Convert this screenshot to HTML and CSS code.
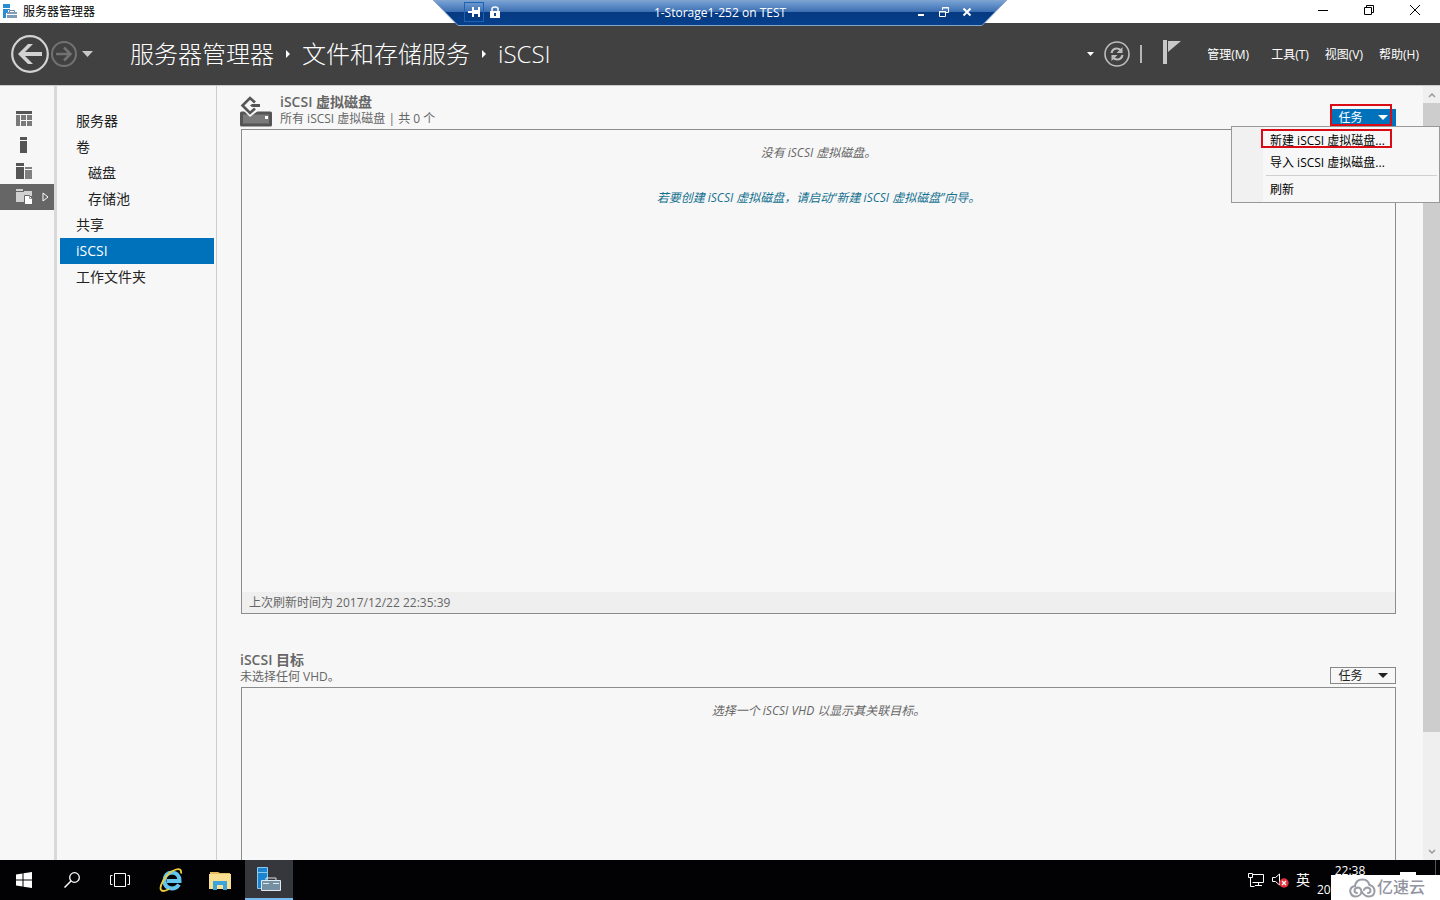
FILE: index.html
```html
<!DOCTYPE html>
<html lang="zh-CN">
<head>
<meta charset="utf-8">
<title>服务器管理器</title>
<link rel="stylesheet" href="styles.css">
</head>
<body>
<div class="titlebar">
  <svg class="app-icon" width="15" height="15" viewBox="0 0 15 15"><path fill="#2a8dd4" d="M0 0h7v4H0zM0 5h7v1H5v3H3v5H0z"/><path fill="#7f9db5" d="M4 8h10v6H4z"/><path fill="none" stroke="#6688a3" d="M6.500 8V6.500h5V8"/><path stroke="#fff" d="M4 10.500h10"/></svg>
  <span class="titlebar-text">服务器管理器</span>
  <div class="window-controls">
    <button aria-label="最小化"><svg width="12" height="12" viewBox="0 0 12 12"><path d="M1 6.500h10"/></svg></button>
    <button aria-label="还原"><svg width="12" height="12" viewBox="0 0 12 12"><path d="M1.500 3.500h7v7h-7zM3.500 3.500v-2h7v7h-2"/></svg></button>
    <button aria-label="关闭"><svg width="12" height="12" viewBox="0 0 12 12"><path d="M1 1l10 10M11 1L1 11"/></svg></button>
  </div>
</div>

<div class="rdp">
  <svg class="rdp-shape" width="576" height="26" viewBox="0 0 576 26">
    <defs><linearGradient id="rdpfill" x1="0" y1="0" x2="0" y2="1"><stop offset="0" stop-color="#7ba5d6"/><stop offset=".46" stop-color="#3d70b3"/><stop offset=".48" stop-color="#063a82"/><stop offset="1" stop-color="#07408c"/></linearGradient></defs>
    <path d="M1 0L26 25.500H550L575 0z" fill="url(#rdpfill)" stroke="#86a3c8"/>
  </svg>
  <div class="rdp-row">
    <div class="rdp-group">
      <button class="pin" aria-label="固定"><svg width="12" height="10" viewBox="0 0 12 10"><path fill="#fff" d="M0 4h4V0h2v3h4V0h2v10h-2V7H6v3H4V6H0z"/></svg></button>
      <svg width="10" height="12" viewBox="0 0 10 12"><path d="M2 5V3q0-2 3-2t3 2v2" fill="none" stroke="#fff" stroke-width="1.500"/><path fill="#fff" d="M0 5h10v7H0z"/><path fill="#174888" d="M4 7h2v3H4z"/></svg>
    </div>
    <span class="rdp-title">1-Storage1-252 on TEST</span>
    <div class="rdp-group rdp-controls">
      <button aria-label="最小化连接栏"><svg width="10" height="10" viewBox="0 0 10 10"><path fill="#fff" d="M2 7h6v2H2z"/></svg></button>
      <button aria-label="还原连接"><svg width="10" height="10" viewBox="0 0 10 10"><path d="M3.500 3V.500h6v5H7M.500 4.500h6v5h-6zM3 1h7M0 5h7" fill="none" stroke="#fff"/></svg></button>
      <button aria-label="关闭连接"><svg width="10" height="10" viewBox="0 0 10 10"><path d="M1.500 1.500l7 7M8.500 1.500l-7 7" stroke="#fff" stroke-width="2"/></svg></button>
    </div>
  </div>
</div>

<header class="header">
  <div class="nav">
    <button aria-label="后退"><svg width="38" height="38" viewBox="0 0 38 38"><circle cx="19" cy="19" r="17.800" fill="none" stroke="#d2d2d2" stroke-width="2.200"/><path d="M31 17H14l8-8h-5L7 19l10 10h5l-8-8h17z" fill="#d2d2d2"/></svg></button>
    <button aria-label="前进"><svg width="26" height="26" viewBox="0 0 26 26"><circle cx="13" cy="13" r="12" fill="none" stroke="#727272" stroke-width="2"/><path d="M5 13h14M13 6.500l6.500 6.500-6.500 6.500" fill="none" stroke="#727272" stroke-width="2.500"/></svg></button>
    <button class="nav-more" aria-label="历史记录"><svg width="11" height="7" viewBox="0 0 11 7"><path fill="#c8c8c8" d="M0 0h11L5.500 6z"/></svg></button>
  </div>
  <nav class="crumbs">
    <a href="#">服务器管理器</a>
    <svg width="6" height="8" viewBox="0 0 6 8"><path fill="#fff" d="M1 0v8l4-4z"/></svg>
    <a href="#">文件和存储服务</a>
    <svg width="6" height="8" viewBox="0 0 6 8"><path fill="#fff" d="M1 0v8l4-4z"/></svg>
    <a href="#">iSCSI</a>
  </nav>
  <div class="tools">
    <svg width="7" height="4" viewBox="0 0 7 4"><path fill="#fff" d="M0 0h7L3.500 4z"/></svg>
    <button aria-label="刷新"><svg width="26" height="26" viewBox="0 0 26 26"><circle cx="13" cy="13" r="12" fill="none" stroke="#bdbdbd" stroke-width="1.600"/><path d="M7.500 12q1-4.500 5.500-4.500 2.500 0 4.500 2.500M18.500 14q-1 4.500-5.500 4.500-2.500 0-4.500-2.500" fill="none" stroke="#bdbdbd" stroke-width="2.200"/><path d="M18.500 6v6h-6zM7.500 20v-6h6z" fill="#bdbdbd"/></svg></button>
    <span class="divider"></span>
    <button class="flag" aria-label="通知"><svg width="18" height="24" viewBox="0 0 18 24"><path fill="#c8c8c8" d="M0 0h4v24H0zM5 1h13L5 12z"/></svg></button>
    <div class="menus"><button class="manage">管理(M)</button><button>工具(T)</button><button>视图(V)</button><button>帮助(H)</button></div>
  </div>
</header>

<main class="main">
  <nav class="rail">
    <button aria-label="仪表板"><svg width="16" height="16" viewBox="0 0 16 16"><path fill="#555" d="M0 0h16v3H0z"/><path fill="#7a7a7a" d="M0 4h4v11H0zM5 4h5v5H5zM11 4h5v5h-5zM5 10h5v5H5zM11 10h5v5h-5z"/></svg></button>
    <button aria-label="本地服务器"><svg width="16" height="16" viewBox="0 0 16 16"><path fill="#555" d="M4 0h7v3H4zM4 4h7v12H4z"/></svg></button>
    <button aria-label="所有服务器"><svg width="16" height="16" viewBox="0 0 16 16"><path fill="#555" d="M0 0h8v3H0zM0 4h8v12H0z"/><path fill="#808080" d="M9 4h7v2H9zM9 7h7v9H9z"/></svg></button>
    <button class="active" aria-label="文件和存储服务"><svg width="17" height="16" viewBox="0 0 17 16"><path fill="#d0d0d0" d="M0 0h7v2H0zM0 3h8v10H0zM8 2h8v5H8z"/><path fill="#fff" stroke="#666" d="M8.500 6.500h5l3 3v6h-8z"/><path fill="none" stroke="#999" d="M13.500 7v2.500H16"/></svg><svg class="expand" width="7" height="10" viewBox="0 0 7 10"><path d="M1 1v8l5-4z" fill="none" stroke="#fff"/></svg></button>
  </nav>
  <nav class="sidebar">
    <a href="#">服务器</a>
    <a href="#">卷</a>
    <a href="#" class="sub">磁盘</a>
    <a href="#" class="sub">存储池</a>
    <a href="#">共享</a>
    <a href="#" class="selected">iSCSI</a>
    <a href="#">工作文件夹</a>
  </nav>
  <div class="content">
    <section class="tile">
      <div class="tile-head">
        <svg class="tile-icon" width="32" height="31" viewBox="0 0 32 31"><path d="M1.500 17h29v12h-29z" fill="#7b7b7b" stroke="#555" stroke-width="3" stroke-linejoin="round"/><path fill="#f7f7f7" d="M1 9h18v5l-9 7-7-7z"/><path fill="#fff" d="M25 20h3v3h-3z"/><path d="M15 6.500L10 2 2.500 9.500 10 17l5-4.500" fill="none" stroke="#555" stroke-width="2.600"/><path fill="#555" d="M10 9.500l2-1.500h8v3h-8z"/></svg>
        <div class="tile-titles"><h2>iSCSI 虚拟磁盘</h2><p>所有 iSCSI 虚拟磁盘 | 共 0 个</p></div>
        <div class="tasks">
          <button class="tasks-btn open">任务<svg width="10" height="5" viewBox="0 0 10 5"><path fill="currentColor" d="M0 0h10L5 5z"/></svg></button>
          <div class="menu">
            <button>新建 iSCSI 虚拟磁盘...</button>
            <button>导入 iSCSI 虚拟磁盘...</button>
            <hr>
            <button>刷新</button>
            <span class="mark mark-item"></span>
          </div>
          <span class="mark mark-tasks"></span>
        </div>
      </div>
      <div class="panel panel-disks">
        <div class="empty"><p>没有 iSCSI 虚拟磁盘。</p><a href="#">若要创建 iSCSI 虚拟磁盘，请启动“新建 iSCSI 虚拟磁盘”向导。</a></div>
        <div class="panel-foot">上次刷新时间为 2017/12/22 22:35:39</div>
      </div>
    </section>
    <section class="tile tile-targets">
      <div class="tile-head">
        <div class="tile-titles"><h2>iSCSI 目标</h2><p>未选择任何 VHD。</p></div>
        <div class="tasks"><button class="tasks-btn">任务<svg width="10" height="5" viewBox="0 0 10 5"><path fill="currentColor" d="M0 0h10L5 5z"/></svg></button></div>
      </div>
      <div class="panel panel-targets"><div class="empty"><p>选择一个 iSCSI VHD 以显示其关联目标。</p></div></div>
    </section>
  </div>
  <div class="scrollbar">
    <button aria-label="向上滚动"><svg width="8" height="6" viewBox="0 0 8 6"><path d="M1 5l3-3 3 3" fill="none" stroke="#999" stroke-width="1.500"/></svg></button>
    <div class="track"><div class="thumb"></div></div>
    <button aria-label="向下滚动"><svg width="8" height="6" viewBox="0 0 8 6"><path d="M1 1l3 3 3-3" fill="none" stroke="#999" stroke-width="1.500"/></svg></button>
  </div>
</main>

<footer class="taskbar">
  <div class="system-apps">
    <button aria-label="开始"><svg width="16" height="16" viewBox="0 0 16 16"><path fill="#fff" d="M0 2.500l6.500-1v6H0zM7.500 1.300L16 0v7.500H7.500zM0 8.500h6.500v6l-6.500-1zM7.500 8.500H16V16l-8.500-1.300z"/></svg></button>
    <button aria-label="搜索"><svg width="16" height="16" viewBox="0 0 16 16"><circle cx="10.500" cy="5.500" r="4.800" fill="none" stroke="#fff" stroke-width="1.300"/><path d="M7 9L.500 15.500" stroke="#fff" stroke-width="1.500"/></svg></button>
    <button aria-label="任务视图"><svg width="22" height="14" viewBox="0 0 22 14"><path d="M5.500.500h11v13h-11zM3.500 2.500h-2v9h2M18.500 2.500h2v9h-2" fill="none" stroke="#fff"/></svg></button>
  </div>
  <div class="apps">
    <button aria-label="Internet Explorer"><svg width="24" height="24" viewBox="0 0 24 24"><path d="M20 16.500Q17.500 20.500 13 20.500 5.500 20 5.500 12.500 6 5 13 4.500q7.500.500 7.500 8.500H8" fill="none" stroke="#64c5ef" stroke-width="4"/><path d="M4 23Q-1 22 4 13 9 4 17 1.500q6-1.500 5 4M4 23q3 0 6-2" fill="none" stroke="#f0cf38" stroke-width="1.800"/></svg></button>
    <button aria-label="文件资源管理器"><svg width="22" height="19" viewBox="0 0 22 19"><path fill="#e8bc5e" d="M1 1h8l2 1h10v15H1z"/><path fill="#f9df91" d="M0 3h22v15H0z"/><path fill="#3ba4dc" d="M4 10h14v9h-4v-5H8v5H4z"/></svg></button>
    <button class="running" aria-label="服务器管理器"><svg width="24" height="24" viewBox="0 0 24 24"><path fill="#1c83cf" stroke="#8cc9ee" d="M.500.500h10v21H.500zM1 5.500h9"/><path fill="none" stroke="#d9e4ec" d="M9 13v-2h10v2"/><path fill="#758fa3" stroke="#dfe8ef" d="M4.500 13.500h19v10h-19z"/><path stroke="#dfe8ef" d="M6 16.500h6M16 16.500h6"/></svg></button>
  </div>
  <div class="tray">
    <svg width="17" height="14" viewBox="0 0 17 14"><path d="M4.500 1.500h11v8h-11M.500.500h4v4h-4zM2.500 5v8.500h4M10.500 9.500v3M7 12.500h7" fill="none" stroke="#fff"/></svg>
    <svg width="17" height="15" viewBox="0 0 17 15"><path d="M.500 4.500h3l4-3.500v11l-4-3.500h-3z" fill="none" stroke="#fff"/><circle cx="12" cy="10" r="4.700" fill="#e0303c"/><path d="M10 8l4 4M14 8l-4 4" stroke="#fff" stroke-width="1.300"/></svg>
    <span class="ime">英</span>
    <div class="clock"><time>22:38</time><span>20</span></div>
    <span class="note"></span>
    <span class="desktop-edge"></span>
  </div>
  <div class="brand"><svg width="27" height="20" viewBox="0 0 27 20"><g fill="none" stroke="#9a9ca6" stroke-width="2" stroke-linecap="round"><path d="M6 8Q7 1.500 13.500 1.500 19 1.500 20.500 7"/><path d="M6 8Q1 9 1.200 13.500 2 18.500 7 18.500q5-.500 5.500-5-.500-4-4-4Q5.500 10 5.500 13 6 15 8 15"/><path d="M20.500 7q5 1 5 6.500-.500 5-5.500 5-4.500 0-7.500-5M15 12q1-2.500 3.500-2.500 3 .500 3 3.500-.500 2-2.500 2"/></g></svg><span>亿速云</span></div>
</footer>
</body>
</html>
```
FILE: styles.css
```css
* { box-sizing: border-box; }
body {
  margin: 0;
  height: 100vh;
  display: flex;
  flex-direction: column;
  overflow: hidden;
  position: relative;
  background: #f7f7f7;
  color: #222;
  font: 12px/16px "Open Sans", "Noto Sans CJK SC", sans-serif;
}
button {
  display: flex;
  align-items: center;
  justify-content: center;
  border: 0;
  padding: 0;
  background: none;
  color: inherit;
  font: inherit;
}
a { color: inherit; text-decoration: none; }
p, h2 { margin: 0; }
svg { display: block; flex: none; }

.titlebar { display: flex; align-items: center; flex: none; height: 23px; padding-left: 3px; background: #fff; color: #000; }
.titlebar-text { margin-left: 5px; }
.window-controls { display: flex; margin-left: auto; height: 20px; align-self: flex-start; }
.window-controls button { width: 46px; }
.window-controls button:last-child { margin-right: 2px; }
.window-controls path { fill: none; stroke: #000; }

.rdp { position: absolute; z-index: 5; top: 0; left: 50%; margin-left: -288px; width: 576px; height: 26px; color: #fff; }
.rdp-shape { position: absolute; top: 0; left: 0; }
.rdp-row { position: relative; display: grid; grid-template-columns: 1fr auto 1fr; align-items: center; height: 24px; padding: 0 36px 0 32px; }
.rdp-title { padding: 2px 0 0 4px; }
.rdp-group { display: flex; align-items: center; gap: 6px; }
.pin { width: 20px; height: 20px; border: 1px solid #1d63b4; }
.rdp-controls { justify-content: flex-end; gap: 13px; }

.header { display: flex; align-items: center; flex: none; height: 62px; padding: 0 21px 0 11px; background: #414141; color: #fff; }
.nav { display: flex; align-items: center; gap: 2px; width: 119px; }
.nav-more { margin-left: 3px; }
.crumbs { display: flex; align-items: center; gap: 11px; font-size: 24px; line-height: 32px; font-weight: 300; }
.tools { display: flex; align-items: center; margin-left: auto; }
.tools button { margin-left: 10px; }
.divider { width: 2px; height: 18px; margin-left: 10px; background: #b5b5b5; }
.tools .flag { margin: 0 0 4px 21px; }
.menus { display: flex; gap: 16px; margin-left: 26px; padding-top: 2px; }
.tools .menus button { margin: 0; }
.tools .menus .manage { margin-right: 6px; }

.main { display: flex; flex: 1; min-height: 0; border-top: 1px solid #ccc; }
.rail { flex: none; width: 57px; padding-top: 20px; border-right: 3px solid #d9d9d9; }
.rail button { width: 100%; height: 26px; padding-left: 16px; justify-content: flex-start; }
.rail .active { background: #666; }
.expand { margin-left: 9px; }
.sidebar { flex: none; width: 160px; padding: 22px 2px 0 3px; border-right: 1px solid #ccc; font-size: 14px; line-height: 26px; }
.sidebar a { display: block; padding-left: 16px; }
.sidebar .sub { padding-left: 28px; }
.sidebar .selected { background: #0072bc; color: #fff; }

.content { display: flex; flex-direction: column; flex: 1; min-width: 0; padding: 7px 27px 0 23px; color: #666; }
.tile-head { display: flex; align-items: flex-end; padding-bottom: 2px; }
.tile-icon { margin-right: 8px; }
.tile-titles h2 { font-size: 14px; line-height: 18px; font-weight: 600; }
.tasks { position: relative; margin: 0 0 1px auto; }
.tasks-btn { width: 66px; height: 17px; gap: 15px; border: 1px solid #888; color: #222; }
.tasks-btn.open { border-color: #0072bc; background: #0072bc; color: #fff; }
.panel { display: flex; flex-direction: column; margin-left: 1px; border: 1px solid #8c8c8c; }
.panel-disks { min-height: 485px; }
.empty { flex: 1; padding-top: 15px; text-align: center; font-style: italic; }
.empty p { margin-bottom: 29px; }
.empty a { color: #14718f; }
.panel-foot { padding: 3px 7px 2px; background: #efefef; }
.tile-targets { display: flex; flex-direction: column; flex: 1; margin-top: 37px; }
.panel-targets { flex: 1; border-bottom: 0; }

.menu { position: absolute; z-index: 3; top: 17px; right: -44px; width: 209px; padding: 3px 2px 1px; border: 1px solid #999; background: linear-gradient(90deg, #f1f1f1 31px, #f7f7f7 31px); color: #000; }
.menu button { width: 100%; height: 22px; padding-left: 36px; justify-content: flex-start; white-space: nowrap; }
.menu hr { height: 1px; margin: 1px 0 3px 32px; border: 0; background: #d0d0d0; }
.mark { position: absolute; border: 2px solid #d90b14; pointer-events: none; }
.mark-tasks { z-index: 4; top: -5px; left: 0; width: 62px; height: 22px; }
.mark-item { top: 2px; left: 29px; width: 131px; height: 19px; }

.scrollbar { display: flex; flex-direction: column; flex: none; width: 17px; background: #efefef; }
.scrollbar button { height: 17px; }
.track { flex: 1; }
.thumb { height: 85%; background: #cdcdcd; }

.taskbar { position: relative; display: flex; flex: none; height: 40px; background: #020204; color: #fff; }
.system-apps, .apps { display: flex; }
.apps { gap: 1px; padding-left: 3px; }
.taskbar button { width: 48px; height: 40px; }
.taskbar .running { background: #36373c; border-bottom: 2px solid #76b9ed; }
.tray { display: flex; align-items: center; margin-left: auto; }
.tray svg { margin-right: 7px; }
.ime { font-size: 14px; }
.clock { display: flex; flex-direction: column; align-self: flex-start; width: 66px; margin-left: 7px; padding-top: 1px; line-height: 19px; }
.clock time { text-align: center; }
.note { align-self: flex-start; width: 16px; height: 4px; margin: 12px 19px 0 17px; background: #fff; }
.desktop-edge { align-self: flex-start; width: 1px; height: 15px; margin-right: 4px; background: #555; }
.brand { position: absolute; right: 0; bottom: 0; display: flex; align-items: center; gap: 1px; width: 109px; height: 25px; padding-left: 18px; background: #fff; color: #92949f; font-size: 16px; line-height: 25px; font-weight: 500; }
```
